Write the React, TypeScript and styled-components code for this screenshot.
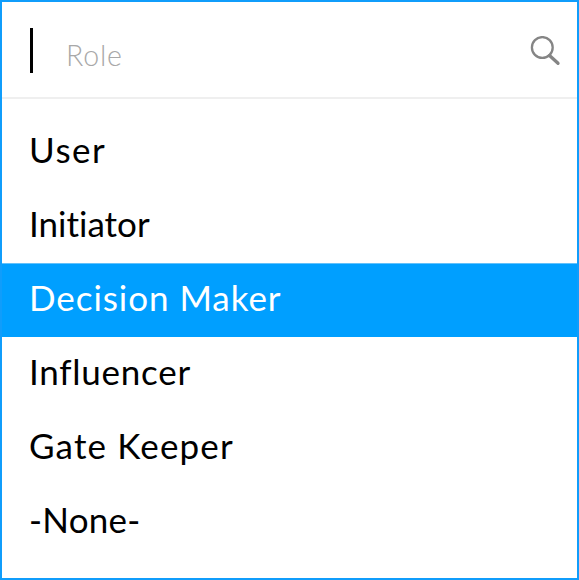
import React from "react";
import styled, { createGlobalStyle } from "styled-components";

const GlobalStyle = createGlobalStyle`
  *, *::before, *::after { box-sizing: border-box; }
  body { margin: 0; background: #fff; }
`;

const Dropdown = styled.section`
  width: 579px;
  height: 580px;
  border: 2px solid #109dfb;
  background: #fff;
  font-family: Lato, "Open Sans", sans-serif;
  font-variant-ligatures: none;
  overflow: hidden;
`;

const SearchBar = styled.div`
  height: 97px;
  display: flex;
  align-items: flex-start;
  border-bottom: 2px solid #efefef;
  padding: 26px 16px 0 28px;
`;

const Caret = styled.span`
  width: 3px;
  height: 45px;
  background: #000;
`;

const Placeholder = styled.span`
  flex: 1;
  margin-left: 33px;
  padding-top: 9px;
  font-size: 28.5px;
  font-weight: 300;
  letter-spacing: 0.8px;
  line-height: 36px;
  color: #a8a8a8;
`;

const SearchIcon = styled.svg`
  width: 32px;
  height: 32px;
  margin-top: 8px;
`;

const Options = styled.ul`
  list-style: none;
  margin: 0;
  padding: 16px 0 0;
`;

const Option = styled.li<{ $selected?: boolean; $tracking: number }>`
  height: 74px;
  padding: 0 27px 7px;
  display: flex;
  align-items: center;
  font-size: 35px;
  letter-spacing: ${(p) => p.$tracking}px;
  background: ${(p) => (p.$selected ? "#009fff" : "transparent")};
  box-shadow: ${(p) => (p.$selected ? "inset 0 1px #62c1fb" : "none")};
  color: ${(p) => (p.$selected ? "#fff" : "#000")};
`;

const roles = [
  { name: "User", tracking: 1.5 },
  { name: "Initiator", tracking: 0 },
  { name: "Decision Maker", tracking: 0.95 },
  { name: "Influencer", tracking: 0.75 },
  { name: "Gate Keeper", tracking: 1.15 },
  { name: "-None-", tracking: 0.25 },
];

export default function App() {
  return (
    <>
      <GlobalStyle />
      <Dropdown>
        <SearchBar>
          <Caret />
          <Placeholder>Role</Placeholder>
          <SearchIcon viewBox="0 0 32 32" fill="none" stroke="#858585">
            <circle cx="13.3" cy="11.5" r="10.4" strokeWidth="2.3" />
            <path d="M20.5 19.5 29 27.3" strokeWidth="3.3" strokeLinecap="round" />
          </SearchIcon>
        </SearchBar>
        <Options>
          {roles.map((r) => (
            <Option key={r.name} $tracking={r.tracking} $selected={r.name === "Decision Maker"}>
              {r.name}
            </Option>
          ))}
        </Options>
      </Dropdown>
    </>
  );
}
